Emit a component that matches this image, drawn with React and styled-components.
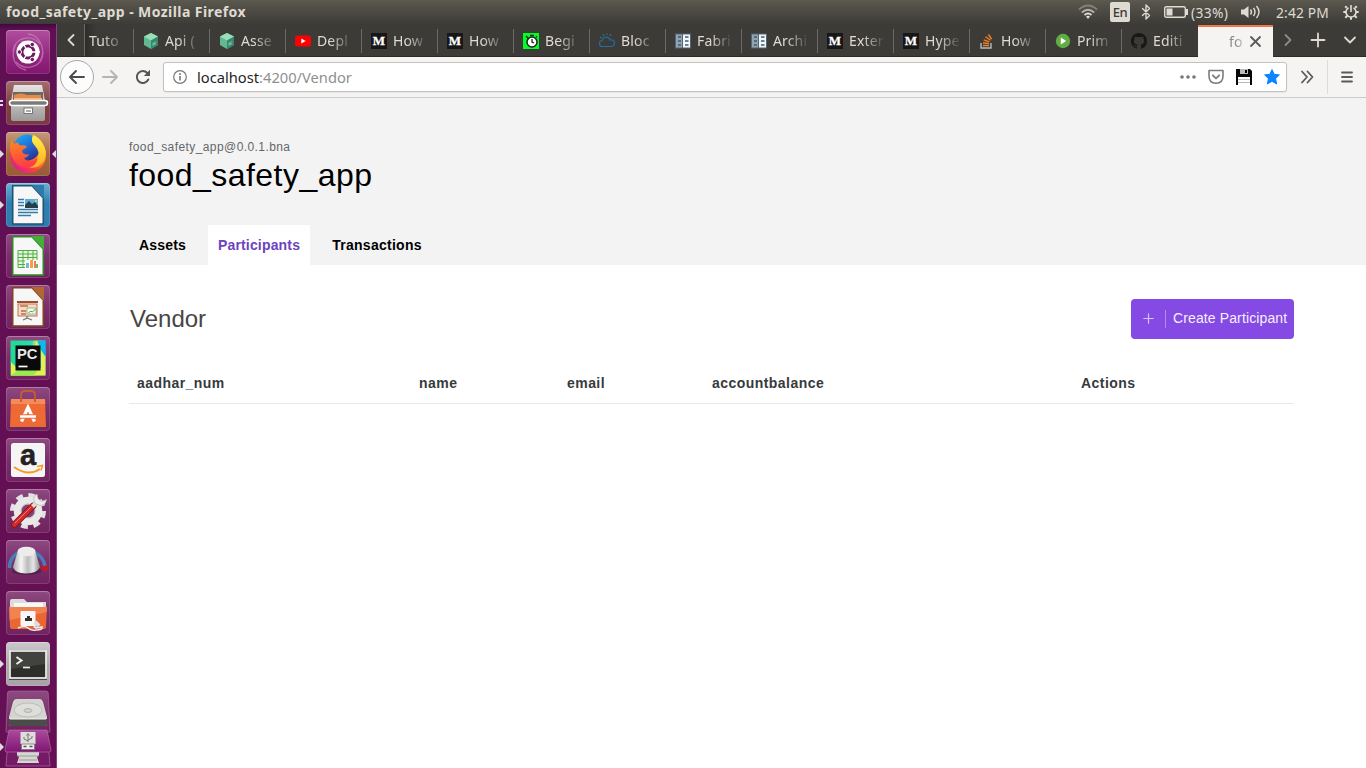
import React from "react";
import styled, { createGlobalStyle } from "styled-components";

const Global = createGlobalStyle`
  * { box-sizing: border-box; }
  html, body { margin: 0; padding: 0; overflow: hidden; background: #fff; }
  svg { display: block; flex: none; overflow: visible; }
`;
const ui = `"Noto Sans", "Open Sans", sans-serif`;
const web = `"Liberation Sans", Arial, sans-serif`;

const Desktop = styled.div`
  width: 1366px; height: 768px; overflow: hidden;
  display: flex; flex-direction: column;
  font-family: ${ui};
`;
const Panel = styled.header`
  height: 24px; flex: none; display: flex; align-items: center; justify-content: space-between;
  padding: 0 7px 0 6px; color: #dfdbd2;
  background: linear-gradient(#5c5a50 0, #56544b 3px, #3e3d39 23px, #3c3b37);
`;
const WindowTitle = styled.span`
  font-size: 14px; font-weight: 700; line-height: 24px; white-space: pre; letter-spacing: .43px;
`;
const Indicators = styled.div`
  display: flex; align-items: center; height: 24px; font-size: 13.8px; white-space: pre;
`;
const Indicator = styled.div`
  width: ${p => p.$w}px; display: flex; align-items: center; flex: none; letter-spacing: ${p => p.$track || 0}px;
`;
const Lang = styled.span`
  width: 20px; height: 20px; border-radius: 2px; background: #dfdbd2; color: #3c3b37;
  font-size: 13px; line-height: 20px; text-align: center; letter-spacing: -0.4px; font-weight: 500;
`;
const Body = styled.div`display: flex; flex: 1; min-height: 0;`;

const Launcher = styled.nav`
  width: 57px; flex: none; padding: 6px 0 0 6px; position: relative; overflow: hidden;
  background: linear-gradient(#45083f 0, #5e1053 6px, #640f54 50%, #651055);
  border-right: 1px solid #87467f;
  display: flex; flex-direction: column; gap: 7px;
`;
const Tile = styled.div`
  width: 44px; height: 44px; flex: none; border-radius: 4px; position: relative;
  display: flex; align-items: center; justify-content: center;
  background: ${p => p.$bg || "linear-gradient(#8d4a80, #7a2e6b 50%, #70235f)"};
  box-shadow: inset 0 0 0 1px rgba(255,255,255,.13), inset 0 1px 0 rgba(255,255,255,.2);
`;
const Running = styled.i`
  position: absolute; top: 18px; width: 0; height: 0;
  ${p => p.$side === "right" ? "left: 46px; border-right: 4px solid #ddd;" : "left: -6px; border-left: 4px solid #ddd;"}
  border-top: 4px solid transparent; border-bottom: 4px solid transparent;
`;
const RunningPair = styled.i`
  position: absolute; left: -6px; top: 19px; width: 3px; height: 6px;
  border-top: 2px solid #ddd; border-bottom: 2px solid #ddd;
`;
const Folded = styled.div`
  display: flex; flex-direction: column; margin-top: -4px; margin-left: -6px;
`;

const Browser = styled.main`flex: 1; min-width: 0; display: flex; flex-direction: column;`;
const TabStrip = styled.div`
  height: 33px; flex: none; display: flex; background: #3c3b37; color: #dfdbd2;
  border-bottom: 1px solid #2c2b28;
`;
const StripButton = styled.div`
  width: ${p => p.$w}px; flex: none; display: flex; align-items: center; justify-content: center;
`;
const CutTab = styled.div`
  width: 49px; flex: none; padding-left: 4px; border-left: 1px solid #6b6a66; font-size: 14px; line-height: 33px;
  background: linear-gradient(90deg, #2e2d2a, #3c3b37 12px);
`;
const Tab = styled.div`
  width: 76px; flex: none; display: flex; align-items: center; padding-left: 9px; gap: 6px;
  font-size: 14px; line-height: 33px; position: relative; padding-top: 1px;
  &::before { content: ""; align-self: center; width: 1px; height: 24px; background: #6b6a66; margin: 0 3px 0 -9px; }
`;
const Fade = styled.span`
  display: block; width: ${p => p.$w || 38}px; white-space: pre; letter-spacing: .15px;
  -webkit-mask-image: linear-gradient(90deg, #000 35%, transparent 96%);
  mask-image: linear-gradient(90deg, #000 35%, transparent 96%);
`;
const ActiveTab = styled.div`
  width: 75px; height: 33px; flex: none; background: #f5f4f3; border-top: 2px solid #f07746; margin: 1px 0 0 1px;
  display: flex; align-items: center; padding: 0 0 3px 31px; color: #8b8b8b; font-size: 14px;
`;
const Toolbar = styled.div`
  height: 41px; flex: none; background: #f5f4f3; border-bottom: 1px solid #cbcaca;
  display: flex; align-items: center;
`;
const Back = styled.div`
  width: 34px; height: 34px; border-radius: 50%; border: 1px solid #a9a8a8; background: #fcfcfc; margin-left: 3px;
  display: flex; align-items: center; justify-content: center;
`;
const UrlBar = styled.div`
  width: 1124px; height: 30px; margin-left: 4px; border: 1px solid #c3c2c1; border-radius: 3px; background: #fff;
  display: flex; align-items: center; box-shadow: 0 1px 2px rgba(0,0,0,.06);
`;
const Address = styled.span`
  flex: 1; margin-left: 1px; font-size: 14.7px; color: #8f8f8f;
  b { font-weight: 400; color: #1f1f1f; }
`;
const UrlActions = styled.div`display: flex; align-items: center; gap: 12px; margin-right: 6px;`;
const MenuCell = styled.div`
  height: 34px; padding-left: 12px; border-left: 1px solid #dcdbda; display: flex; align-items: center;
`;

const Page = styled.div`flex: 1; background: #fff; font-family: ${web};`;
const Hero = styled.section`
  height: 167px; background: #f3f3f3; padding: 41px 72px 0; display: flex; flex-direction: column;
`;
const Network = styled.div`font-size: 12px; line-height: 16px; color: #63676b; letter-spacing: .42px;`;
const AppName = styled.h1`
  margin: 0; font-size: 32px; font-weight: 400; line-height: 40px; color: #000; letter-spacing: .45px; flex: 1;
`;
const NavTabs = styled.div`display: flex; gap: 12px;`;
const NavTab = styled.div`
  height: 40px; line-height: 40px; padding: 0 10px; font-size: 14px; font-weight: 700; letter-spacing: ${p => p.$track || .17}px;
  background: ${p => p.$active ? "#fff" : "transparent"}; color: ${p => p.$active ? "#6c43c0" : "#000"};
`;
const Content = styled.section`padding: 34px 72px 0;`;
const Heading = styled.div`display: flex; justify-content: space-between; align-items: center; height: 40px;`;
const Title = styled.h2`margin: 0; padding-left: 1px; font-size: 24px; font-weight: 400; color: #464646; line-height: 40px;`;
const Create = styled.button`
  width: 163px; height: 40px; padding: 0 0 2px 12px; border: 0; border-radius: 4px; background: #844ae3; color: #f6efff;
  display: flex; align-items: center; font: 14px ${web}; letter-spacing: .12px; white-space: nowrap;
`;
const Divider = styled.i`width: 1px; height: 18px; margin: 2px 7px 0 11px; background: #b08cf0;`;
const HeaderRow = styled.div`
  margin-top: 24px; height: 41px; border-bottom: 1px solid #e6e8ea; padding-left: 8px;
  display: grid; grid-template-columns: 282px 148px 145px 369px 1fr;
  font-size: 14px; font-weight: 700; line-height: 40px; color: #373a3c; letter-spacing: .45px;
`;

/* Launcher drawings, 44px grid */
const Art = ({ children }) => <svg width="44" height="44" viewBox="0 0 44 44">{children}</svg>;

const Dash = () => (
  <Art>
    <g fill="none" stroke="#c98bbd" strokeWidth="1.3" opacity=".65">
      <path d="M7 21C8 8 25 3 34 14M37 22C37 37 20 42 10 32M22 4C35 5 40 21 34 31M20 40C8 38 4 25 10 14" />
    </g>
    <circle cx="22" cy="22" r="11.5" fill="#fff" />
    <circle cx="22" cy="22" r="6" fill="none" stroke="#6d1a5e" strokeWidth="3" />
    <path d="M22 22L34 22M22 22L16 11.6M22 22L16 32.4" stroke="#fff" strokeWidth="1.3" />
    <circle cx="22" cy="22" r="4.3" fill="#fff" />
    <g fill="#6d1a5e" stroke="#fff" strokeWidth=".9"><circle cx="13.4" cy="22" r="2.2" /><circle cx="26.3" cy="14.5" r="2.2" /><circle cx="26.3" cy="29.5" r="2.2" /></g>
  </Art>
);
const Files = () => (
  <Art>
    <defs><linearGradient id="cab" x2="0" y2="1"><stop stopColor="#e5e4e2" /><stop offset="1" stopColor="#9b9a98" /></linearGradient></defs>
    <path d="M8 4h28l3 16v18q0 2-2 2H7q-2 0-2-2V20z" fill="url(#cab)" />
    <path d="M7 11h30v10H7z" fill="#6d6863" /><path d="M8 14q7-3 13 0h14v8H8z" fill="#e58a4c" /><path d="M8 17h28v4H8z" fill="#f5b483" />
    <rect x="3.5" y="19.500" width="38" height="5" rx="2.500" fill="#7c7a78" stroke="#fff" strokeWidth="1.600" />
    <rect x="18" y="27" width="8.500" height="5.500" fill="#fff" stroke="#777" /><path d="M20 30h5" stroke="#555" />
  </Art>
);
const Firefox = () => (
  <Art>
    <defs>
      <linearGradient id="fx" x1=".95" y1=".1" x2=".2" y2=".9"><stop stopColor="#ffd52e" /><stop offset=".35" stopColor="#ff9a1f" /><stop offset=".65" stopColor="#ff4438" /><stop offset="1" stopColor="#e3208a" /></linearGradient>
      <linearGradient id="fb" x2=".6" y2="1"><stop stopColor="#18b4f8" /><stop offset=".55" stopColor="#1f6fd8" /><stop offset="1" stopColor="#2a3596" /></linearGradient>
      <linearGradient id="fl" x2="0" y2="1"><stop stopColor="#fff04a" /><stop offset="1" stopColor="#ffab1e" /></linearGradient>
      <linearGradient id="fh" x2=".2" y2="1"><stop stopColor="#ff8a1c" /><stop offset="1" stopColor="#fb3f45" /></linearGradient>
    </defs>
    <circle cx="22" cy="23" r="18" fill="url(#fx)" />
    <circle cx="21" cy="15.500" r="13" fill="url(#fb)" />
    <path d="M27 3q-3 6 2 11 6 6 2 14-3 5-9 7 11 3 16-7 4-8-1-16Q33 5 27 3z" fill="url(#fl)" />
    <path d="M6 8l2 4.500q1.500-2 4-2 .5 2.500 3 3 4-1 6 1-1 2-4 3-2 2 .5 4 3 1.500 5.500.5-1 3.500-5 4 3 4 8 3 4-1 5-4 1 6-4 9-8 4-15-1-6-5-7.500-13Q3 13 6 8z" fill="url(#fh)" />
  </Art>
);
const Office = ({ edge, fold, children }) => (
  <Art>
    <path d="M6.700 2.700H26L37.300 15v26H6.700z" fill="#f7f7f7" stroke={edge} strokeWidth="1.600" />
    <path d="M25.500 2h12.500v14z" fill={fold} />
    {children}
  </Art>
);
const Writer = () => (
  <Office edge="#1f5375" fold="#2f7ba9">
    <path d="M12 16.500h6M12 19.500h6M12 22.500h6M12 26.500h20M12 29.500h20M12 32.500h13" stroke="#347ca6" strokeWidth="1.400" />
    <path d="M19 16h13v9H19z" fill="#59afd9" /><path d="M19 25v-3l4-4 3 3 3-2 3 4v2z" fill="#25404a" /><circle cx="30" cy="18" r="1" fill="#ffd54a" />
  </Office>
);
const Calc = () => (
  <Office edge="#2c8a25" fold="#45ae37">
    <path d="M12 16.500h19v17H12z" fill="#e8f8e3" /><path d="M12 16.500h19v17H12zM12 20h19M12 23.500h19M12 27h19M12 30.500h19M17 16v18M22 16v18M27 16v18" stroke="#51ad43" fill="none" />
    <path d="M19 26h14v9H19z" fill="#fff" /><path d="M20 29h3v5h-3z" fill="#75b7df" /><path d="M24 26h3v8h-3z" fill="#f2a04a" /><path d="M28 27h2v7h-2z" fill="#f17d58" /><path d="M30 30h2v4h-2z" fill="#6ac15c" />
  </Office>
);
const Impress = () => (
  <Office edge="#84411d" fold="#b26632">
    <path d="M11 17h21" stroke="#9f4e28" strokeWidth="2" /><rect x="12" y="19" width="19" height="12" fill="#f9dcc8" stroke="#c07550" />
    <path d="M14 21h8M15 26h5M15 29h5" stroke="#b96b4a" strokeWidth="1.300" /><path d="M21 23h9v6h-9z" fill="#f7fff5" stroke="#81a66f" strokeWidth=".8" /><path d="M22.500 28l2-2 2 1 3-3" stroke="#4b9a46" fill="none" />
    <path d="M21 31v2l-4 2M21 33l5 2" stroke="#777" strokeWidth="1.300" fill="none" />
  </Office>
);
const PyCharm = () => (
  <Art>
    <defs><linearGradient id="pc" x2="1" y2=".15"><stop stopColor="#22d88f" /><stop offset=".6" stopColor="#2adbb0" /><stop offset=".75" stopColor="#f0ec58" /><stop offset="1" stopColor="#08bdf0" /></linearGradient></defs>
    <rect x="4.500" y="4.500" width="35" height="35" fill="url(#pc)" /><path d="M5 26l6 6h24V14l4.500 5v20.500H5z" fill="#e7ef50" /><path d="M4.500 39.500l11-8h19l-7 8z" fill="#9be94d" /><path d="M31 4.500h8.500V21l-4-6z" fill="#0bb9ed" />
    <rect x="9.500" y="9.500" width="25" height="25" fill="#0a0a0a" />
    <text x="11" y="23.300" fontFamily="Liberation Sans, sans-serif" fontWeight="700" fontSize="15" textLength="20.500" lengthAdjust="spacingAndGlyphs" fill="#e8e8e8">PC</text><path d="M12.500 30.500h9" stroke="#fff" strokeWidth="1.700" />
  </Art>
);
const Software = () => (
  <Art>
    <path d="M5 12h34l1 28H4z" fill="#ee6a35" /><path d="M5 12h34l.3 5H4.800z" fill="#f58a5b" />
    <path d="M15 15V8q0-4 4-4h6q4 0 4 4v7" fill="none" stroke="#c85a2c" strokeWidth="1.800" />
    <path d="M15.500 34.500l6.500-14 6.500 14" stroke="#fff" strokeWidth="3.300" fill="none" /><path d="M14 29.500h16" stroke="#ee6a35" strokeWidth="4.500" /><path d="M14 29.500h16" stroke="#fff" strokeWidth="2.500" />
  </Art>
);
const Amazon = () => (
  <Art>
    <rect x="5" y="5" width="34" height="34" rx="2.500" fill="#f5f5f5" />
    <text x="14" y="27" fontFamily="Liberation Sans, sans-serif" fontWeight="700" fontSize="29" fill="#222" stroke="#222" strokeWidth=".5">a</text>
    <path d="M8 29q14 10 26 2" fill="none" stroke="#f79a22" strokeWidth="2" /><path d="M31 28.500l5.500-1-1.500 5" fill="none" stroke="#f79a22" strokeWidth="1.500" />
  </Art>
);
const Settings = () => (
  <Art>
    <circle cx="22" cy="22" r="15.500" fill="none" stroke="#e2e2e2" strokeWidth="5" strokeDasharray="6.600 5.574" />
    <circle cx="22" cy="22" r="10.500" fill="#7f4377" stroke="#e9e9e9" strokeWidth="7.500" />
    <circle cx="22" cy="22" r="7" fill="none" stroke="#b9b4ba" strokeWidth="1" />
    <path d="M8.500 35.500L27 17" stroke="#8d0e12" strokeWidth="6.500" strokeLinecap="round" /><path d="M8.500 35.500L27 17" stroke="#d02a2c" strokeWidth="4.800" strokeLinecap="round" /><path d="M9 34L25 18" stroke="#ef797b" strokeWidth="1" />
    <path d="M26.500 17.500L32 12" stroke="#dcdcdc" strokeWidth="4" /><path d="M31 5q-4 2-3 6.500t7.500 5q4.500-1 5-6l-5 2-3.500-3z" fill="#ededed" stroke="#aaa" strokeWidth=".6" />
  </Art>
);
const Knob = () => (
  <Art>
    <defs><linearGradient id="kn" x2="1"><stop stopColor="#aaa" /><stop offset=".3" stopColor="#f6f6f6" /><stop offset=".55" stopColor="#bbb" /><stop offset=".75" stopColor="#e6e6e6" /><stop offset="1" stopColor="#888" /></linearGradient></defs>
    <path d="M3.500 28q0-12 11-16M29 13q8 3 10 13" stroke="#4a7bb5" fill="none" strokeWidth="3.500" /><path d="M33 26.500l9-1q0 4-2 6.500z" fill="#c9171e" />
    <ellipse cx="20.500" cy="31" rx="15" ry="4" fill="#3a1a35" opacity=".5" />
    <path d="M11.500 12L7 27q2 6.500 13 6.500T34 27l-4.500-15z" fill="url(#kn)" /><ellipse cx="20.500" cy="11.500" rx="9" ry="4.800" fill="#ececec" />
  </Art>
);
const NetFolder = () => (
  <Art>
    <path d="M4 10q0-2 2-2h12l3 3h19v20H4z" fill="#dddcd9" /><path d="M8 12h29v7H8z" fill="#f8f8f8" /><path d="M3 16h38l-1 20q0 2-2 2H6q-2 0-2-2z" fill="#eb6732" /><path d="M3.500 16h37.500l-.3 5-37 8z" fill="#f28350" />
    <rect x="14.500" y="20" width="15" height="15" rx="1" fill="#f7f6f4" /><path d="M19 30v-3h2v-2h3v2h2v3z" fill="#34322f" />
    <path d="M12 37q7-3 10 0t8 2q7 0 6-3l-6 1q-4-2 1-3" stroke="#eee" fill="none" strokeWidth="1.600" /><path d="M29 31l4 4" stroke="#ddd" strokeWidth="4" />
  </Art>
);
const Term = () => (
  <Art>
    <path d="M4 8h36l1 30H3z" fill="#4a4a48" /><rect x="4" y="9" width="36" height="27" fill="#2d2d2b" stroke="#f1f1ee" strokeWidth="1.700" /><path d="M5 10h34v12L5 27z" fill="#42423f" />
    <path d="M10.500 15l5 3.500-5 3.500" fill="none" stroke="#eee" strokeWidth="2" /><path d="M17 25.500h7" stroke="#eee" strokeWidth="1.700" />
  </Art>
);
const FoldedDrives = () => (
  <svg width="52" height="78" viewBox="0 0 52 78">
    <defs><linearGradient id="fd" x2="0" y2="1"><stop stopColor="#8d4a80" /><stop offset="1" stopColor="#6d205d" /></linearGradient><linearGradient id="usb" x2="0" y2="1"><stop stopColor="#ac4b9d" /><stop offset="1" stopColor="#7e1671" /></linearGradient></defs>
    <path d="M10 2h36q2 0 2.200 2L50 43H6L7.500 4q0-2 2.500-2z" fill="url(#fd)" stroke="#a06c96" strokeWidth=".7" />
    <path d="M16 10h24q2 0 3 3l4 15v7q0 2-3 2H12q-3 0-3-2v-7l4-15q1-3 3-3z" fill="#d4d4d1" /><path d="M9 30h38v5q0 2-3 2H12q-3 0-3-2z" fill="#4b4b49" /><path d="M10 30h36" stroke="#f2f2f0" /><ellipse cx="28" cy="21" rx="14" ry="7" fill="#dededb" stroke="#b5b5b2" strokeWidth=".8" /><ellipse cx="28" cy="21.500" rx="4" ry="2" fill="#d0d0cd" stroke="#aaa" strokeWidth=".8" />
    <path d="M9 44h38l2 20 1 13H6l1-13z" fill="#761a67" stroke="#a5629a" strokeWidth=".8" /><path d="M17 61h22v5l-2 2 2 6H17l2-6-2-2z" fill="#d6d6d2" /><path d="M17 67h22M19 71h18" stroke="#999994" />
    <path d="M9 41h38l4 20q0 2-2 2H7q-2 0-2-2z" fill="url(#usb)" stroke="#b974ad" strokeWidth=".6" />
    <path d="M20.500 43h15v12h-15z" fill="#ddddda" /><path d="M21.500 55h13v5.500h-13z" fill="#eee" stroke="#777" strokeWidth=".8" /><path d="M23.500 57.500h3M29.500 57.500h3" stroke="#555" strokeWidth="1.600" />
    <path d="M28 53v-8M26.500 46.500l1.500-2 1.500 2M28 52l-4-2v-2M28 51l4-2v-2" stroke="#777" fill="none" />
    <path d="M0 54l4 4-4 4z" fill="#ddd" />
  </svg>
);
const apps = [
  { Icon: Dash, bg: "linear-gradient(#b04f9e, #93267f 60%, #82176f)" },
  { Icon: Files, bg: "linear-gradient(#a37074, #83403f 50%, #7c3745)", pair: true },
  { Icon: Firefox, bg: "linear-gradient(#c5987b, #a9683f 50%, #9a5a38)", left: true, right: true },
  { Icon: Writer, bg: "linear-gradient(#6fb0d3, #2e80b0 45%, #2f7cac)", left: true },
  { Icon: Calc }, { Icon: Impress }, { Icon: PyCharm }, { Icon: Software }, { Icon: Amazon }, { Icon: Settings }, { Icon: Knob }, { Icon: NetFolder },
  { Icon: Term, bg: "linear-gradient(#cbc7cb, #b1abb0 50%, #aaa2a9)", left: true },
];

/* Tab favicons, 16px grid */
const Fav = ({ children }) => <svg width="16" height="16" viewBox="0 0 16 16">{children}</svg>;
const favicons = {
  cube: <Fav><path d="M8 0l7 3.500v8.500l-7 4-7-4V3.500z" fill="#62b98f" /><path d="M8 0l7 3.500-7 4-7-4z" fill="#9bdcba" /><path d="M8 7.500l7-4V12l-7 4z" fill="#2f8a70" /><path d="M9.500 10l3.500-2v3l-3.500 2z" fill="#5cc6b4" /><path d="M11 9.500l2.500-1.300v2.500z" fill="#e8574a" /></Fav>,
  youtube: <Fav><rect y="2.500" width="16" height="11" rx="2.500" fill="#f00" /><path d="M6.300 5.500l4.400 2.500-4.400 2.500z" fill="#fff" /></Fav>,
  medium: <Fav><rect width="16" height="16" fill="#171717" /><text x="8" y="12.400" textAnchor="middle" fontFamily="Liberation Serif, serif" fontWeight="700" fontSize="13" fill="#fff" stroke="#fff" strokeWidth=".3">M</text></Fav>,
  clock: <Fav><rect width="16" height="16" fill="#00ff22" /><circle cx="9" cy="9" r="5" fill="#fff" stroke="#222" strokeWidth="1.500" /><path d="M9 6v3l2 1M7 2.500h4M3 3l3 3M13 3l1 1.500" stroke="#222" fill="none" strokeWidth="1.300" /></Fav>,
  cloud: <Fav><path d="M3.500 13.500q-3 0-3-3t3-3q0-3 3.500-3.500 3 0 4 3 4-1 4.500 3 0 3.500-3.500 3.500z" fill="none" stroke="#236fa6" strokeWidth="1.200" /><path d="M3 5l-2-1M5 3L4 1M8 2V.5M11 3l1-2" stroke="#27868e" /></Fav>,
  book: <Fav><rect y=".5" width="16" height="15" fill="#536675" /><path d="M1 1.500h6v13H1z" fill="#8fa3b3" /><path d="M8 1.500h7v13H8z" fill="#f3f6f8" /><path d="M3 4h3M3 8h3M3 12h3M10 4h3.500M10 8h3.500M10 12h3.500" stroke="#465a6a" strokeWidth="1.600" /></Fav>,
  stack: <Fav><path d="M2 10v5h10v-5" fill="none" stroke="#b7bcc0" strokeWidth="1.400" /><path d="M4 12.500h6M4 9.700l6 .9M4.700 6.800l5.700 2M6.500 3.800l5 3.500M9.400 1.500l3.300 4.700" stroke="#f48024" strokeWidth="1.400" /></Fav>,
  play: <Fav><circle cx="8" cy="8" r="7.200" fill="#62ad43" /><path d="M5.800 4.500l5.400 3.500-5.400 3.500z" fill="#fff" /></Fav>,
  github: <Fav><path fill="#191717" d="M8 0C3.580 0 0 3.580 0 8c0 3.540 2.290 6.530 5.470 7.590.4.070.55-.17.55-.38V13.800c-2.230.48-2.700-.94-2.700-.94-.36-.92-.89-1.170-.89-1.170-.73-.5.050-.49.050-.49.810.06 1.230.83 1.230.83.720 1.230 1.880.87 2.340.66.070-.52.280-.87.510-1.070-1.780-.2-3.640-.89-3.640-3.950 0-.87.310-1.590.820-2.150-.08-.2-.36-1.020.08-2.120 0 0 .67-.21 2.200.82A7.600 7.600 0 0 1 8 3.950c.68 0 1.360.09 2 .27 1.530-1.040 2.200-.82 2.200-.82.440 1.100.16 1.920.08 2.120.51.560.82 1.270.82 2.150 0 3.070-1.870 3.750-3.650 3.950.29.250.54.730.54 1.480v2.200c0 .21.150.46.550.38A8 8 0 0 0 16 8c0-4.420-3.580-8-8-8z" /></Fav>,
};
const tabs = [
  ["cube", "Api ("], ["cube", "Asse"], ["youtube", "Depl"], ["medium", "How"], ["medium", "How"], ["clock", "Begi"], ["cloud", "Bloc"],
  ["book", "Fabri"], ["book", "Archi"], ["medium", "Exter"], ["medium", "Hype"], ["stack", "How"], ["play", "Prim"], ["github", "Editi"],
];
const Line = ({ d, w = 16, h = 16, color = "#5a5a5a", sw = 2 }) => (
  <svg width={w} height={h} viewBox={`0 0 ${w} ${h}`} fill="none" stroke={color} strokeWidth={sw} strokeLinecap="round" strokeLinejoin="round"><path d={d} /></svg>
);

const SystemTray = () => (
  <Indicators>
    <Indicator $w={32}>
      <svg width="20" height="16" viewBox="0 0 20 16" fill="none" strokeWidth="1.700"><path d="M1 5.500q9-8 18 0" stroke="#85827b" /><path d="M3.800 8.500q6.200-5.500 12.400 0" stroke="#b5b1a9" /><path d="M6.500 11q3.500-3 7 0" stroke="#dfdbd2" /><path d="M8 12.500q2-1.500 4 0l-2 2.500z" fill="#dfdbd2" /></svg>
    </Indicator>
    <Indicator $w={31}><Lang>En</Lang></Indicator>
    <Indicator $w={23}><Line w={10} h={16} color="#dfdbd2" sw={1.4} d="M1.500 4.500l7 7L5 15V1l3.500 3.500-7 7" /></Indicator>
    <Indicator $w={27}>
      <svg width="24" height="12" viewBox="0 0 24 12"><rect x=".7" y=".7" width="20.600" height="10.600" rx="1.500" fill="none" stroke="#dfdbd2" strokeWidth="1.400" /><path d="M22 3h2v6h-2z" fill="#dfdbd2" /><path d="M2.500 2.500h6v7h-6z" fill="#dfdbd2" /></svg>
    </Indicator>
    <Indicator $w={50} $track={0.35}>(33%)</Indicator>
    <Indicator $w={35}>
      <svg width="20" height="14" viewBox="0 0 20 14"><path d="M0 4.500h3L7.500 1v12L3 9.500H0z" fill="#dfdbd2" /><path d="M9.500 4.500q2 2.500 0 5M12.500 3q3 4 0 8M15.500 1q5 6 0 12" fill="none" stroke="#dfdbd2" strokeWidth="1.400" /></svg>
    </Indicator>
    <Indicator $w={67} $track={0.15}>2:42 PM</Indicator>
    <svg width="16" height="16" viewBox="0 0 16 16" fill="none" stroke="#dfdbd2"><path d="M5.500 3.700a5 5 0 1 0 5 0" strokeWidth="1.600" /><path d="M8 1v7" strokeWidth="1.600" /><path d="M3.800 3.800L2.200 2.200M12.200 3.800l1.600-1.600M3 8H.3M13 8h2.700M4.300 11.700l-2 2M11.700 11.700l2 2M8 13v2.700" strokeWidth="2" /></svg>
  </Indicators>
);

export default function App() {
  return (
    <Desktop>
      <Global />
      <Panel>
        <WindowTitle>food_safety_app - Mozilla Firefox</WindowTitle>
        <SystemTray />
      </Panel>
      <Body>
        <Launcher>
          {apps.map(({ Icon, bg, left, right, pair }, i) => (
            <Tile key={i} $bg={bg}>
              <Icon />
              {left && <Running />}
              {right && <Running $side="right" />}
              {pair && <RunningPair />}
            </Tile>
          ))}
          <Folded><FoldedDrives /></Folded>
        </Launcher>
        <Browser>
          <TabStrip>
            <StripButton $w={27}><Line w={8} h={14} color="#dfdbd2" sw={1.8} d="M6.500 2L1.500 7l5 5" /></StripButton>
            <CutTab><Fade>Tuto</Fade></CutTab>
            {tabs.map(([icon, label], i) => (
              <Tab key={i}>{favicons[icon]}<Fade>{label}</Fade></Tab>
            ))}
            <ActiveTab><Fade $w={20}>fo</Fade><Line w={13} h={13} sw={1.800} d="M2 2l9 9M11 2l-9 9" /></ActiveTab>
            <StripButton $w={30}><Line w={8} h={14} color="#8d8b85" sw={1.8} d="M1.500 2l5 5-5 5" /></StripButton>
            <StripButton $w={30}><Line w={16} h={16} color="#dfdbd2" sw={1.8} d="M8 1.500v13M1.500 8h13" /></StripButton>
            <StripButton $w={33}><Line w={14} h={8} color="#dfdbd2" sw={1.8} d="M2 1.500l5 5 5-5" /></StripButton>
          </TabStrip>
          <Toolbar>
            <Back><Line w={18} sw={1.900} color="#4b4b4b" d="M16 8H2M8 2L2 8l6 6" /></Back>
            <StripButton $w={32}><Line w={18} sw={1.900} color="#b5b4b3" d="M2 8h14M10 2l6 6-6 6" /></StripButton>
            <StripButton $w={33}>
              <svg width="16" height="16" viewBox="0 0 16 16"><path d="M13.300 10.500A6 6 0 1 1 12.300 4" fill="none" stroke="#555" strokeWidth="2" strokeLinecap="round" /><path d="M15 .8V7H8.800z" fill="#555" /></svg>
            </StripButton>
            <UrlBar>
              <StripButton $w={32}>
                <svg width="14" height="14" viewBox="0 0 14 14"><circle cx="7" cy="7" r="6.300" fill="none" stroke="#777" strokeWidth="1.200" /><path d="M7 6v4.500" stroke="#777" strokeWidth="1.600" /><circle cx="7" cy="3.900" r="1" fill="#777" /></svg>
              </StripButton>
              <Address><b>localhost</b>:4200/Vendor</Address>
              <UrlActions>
                <svg width="16" height="16" viewBox="0 0 16 16" fill="#777"><circle cx="2" cy="8" r="1.800" /><circle cx="8" cy="8" r="1.800" /><circle cx="14" cy="8" r="1.800" /></svg>
                <svg width="16" height="16" viewBox="0 0 16 16" fill="none" stroke="#7c7c7c" strokeWidth="1.600" strokeLinecap="round" strokeLinejoin="round"><path d="M1 1.500h14v5.500q0 7-7 7.300Q1 14 1 7z" /><path d="M4.800 6.300L8 9.300l3.200-3" strokeWidth="1.800" /></svg>
                <svg width="16" height="16" viewBox="0 0 16 16"><path d="M0 0h14l2 2v14H0z" fill="#080808" /><path d="M4 0h8v5H4z" fill="#bbb" /><path d="M9 1h2v3H9z" fill="#000" /><path d="M2 8h12v8H2z" fill="#fff" /><path d="M2 10.500h12M2 13.500h12" stroke="#bbb" /></svg>
                <svg width="16" height="16" viewBox="0 0 16 16"><path d="M8 .6l2.200 4.700 5.200.6-3.800 3.600 1 5.400L8 12.300l-4.600 2.600 1-5.400L.6 5.900l5.200-.6z" fill="#0a84ff" stroke="#0a84ff" strokeLinejoin="round" /></svg>
              </UrlActions>
            </UrlBar>
            <StripButton $w={40}><Line w={14} h={14} sw={1.800} d="M2 1.500L7 7l-5 5.500M7.500 1.500l5 5.500-5 5.500" /></StripButton>
            <MenuCell><Line w={14} h={12} sw={1.800} d="M2 1.500h10M2 6h10M2 10.500h10" /></MenuCell>
          </Toolbar>
          <Page>
            <Hero>
              <Network>food_safety_app@0.0.1.bna</Network>
              <AppName>food_safety_app</AppName>
              <NavTabs><NavTab>Assets</NavTab><NavTab $active>Participants</NavTab><NavTab $track={0.28}>Transactions</NavTab></NavTabs>
            </Hero>
            <Content>
              <Heading>
                <Title>Vendor</Title>
                <Create><Line w={11} h={11} color="#d6c3fa" sw={1.200} d="M5.500 .8v9.400M.8 5.500h9.400" /><Divider />Create Participant</Create>
              </Heading>
              <HeaderRow><span>aadhar_num</span><span>name</span><span>email</span><span>accountbalance</span><span>Actions</span></HeaderRow>
            </Content>
          </Page>
        </Browser>
      </Body>
    </Desktop>
  );
}
